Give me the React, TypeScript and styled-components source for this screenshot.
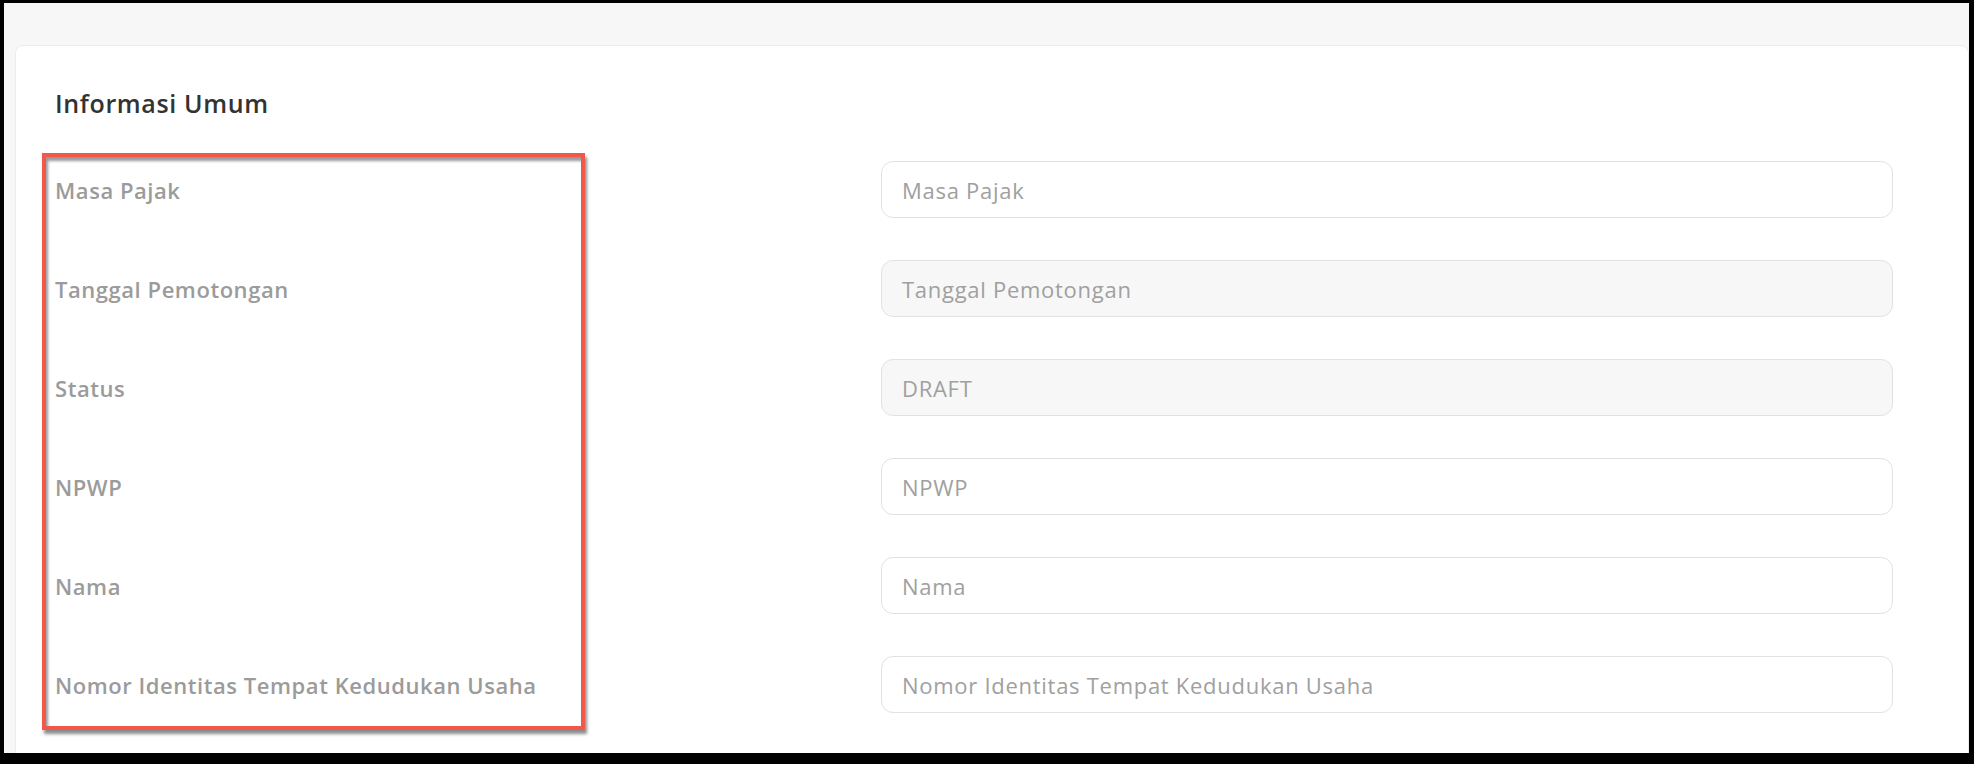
import React from "react";
import styled, { createGlobalStyle } from "styled-components";

const GlobalStyle = createGlobalStyle`
  html, body {
    margin: 0;
    padding: 0;
    background: #000;
  }
  * { box-sizing: border-box; }
  body {
    font-family: "Open Sans", Lato, sans-serif;
  }
`;

const Frame = styled.div`
  position: relative;
  margin: 3px 5px 0 4px;
  height: 750px;
  overflow: hidden;
  background: #f7f7f7;
  padding: 42px 0 0 11px;
`;

const Card = styled.section`
  background: #fff;
  border: 1px solid #ececec;
  border-radius: 8px;
  padding: 43px 60px 40px 39px;
  min-height: 760px;
`;

const Heading = styled.h2`
  margin: 0;
  font-size: 25px;
  line-height: 29px;
  font-weight: 600;
  letter-spacing: 0.65px;
  color: #333;
`;

const Form = styled.div`
  margin-top: 43px;
  display: flex;
  flex-direction: column;
  gap: 42px;
`;

const Row = styled.div`
  display: grid;
  grid-template-columns: 826px 1012px;
  align-items: center;
`;

const Label = styled.label`
  font-size: 22px;
  font-weight: 600;
  letter-spacing: 0.55px;
  color: #9b9b9b;
`;

const Field = styled.input<{ $disabled?: boolean }>`
  height: 57px;
  width: 100%;
  padding: 0 20px;
  border: 1px solid #e2e2e2;
  border-radius: 12px;
  background: ${(p) => (p.$disabled ? "#f7f7f7" : "#fff")};
  font-family: inherit;
  font-size: 22px;
  letter-spacing: 0.72px;
  color: #a0a0a0;
  -webkit-text-fill-color: #a0a0a0;
  outline: none;
  &::placeholder {
    color: #a0a0a0;
    opacity: 1;
  }
`;

const Annotation = styled.div`
  position: absolute;
  left: 38px;
  top: 150px;
  width: 543px;
  height: 577px;
  border: 4px solid #f2584a;
  box-shadow: 2px 4px 3px rgba(0, 0, 0, 0.45),
    inset 2px 4px 3px rgba(0, 0, 0, 0.4);
  pointer-events: none;
`;

type RowData = { label: string; placeholder?: string; value?: string; disabled?: boolean };

const rows: RowData[] = [
  { label: "Masa Pajak", placeholder: "Masa Pajak" },
  { label: "Tanggal Pemotongan", placeholder: "Tanggal Pemotongan", disabled: true },
  { label: "Status", value: "DRAFT", disabled: true },
  { label: "NPWP", placeholder: "NPWP" },
  { label: "Nama", placeholder: "Nama" },
  { label: "Nomor Identitas Tempat Kedudukan Usaha", placeholder: "Nomor Identitas Tempat Kedudukan Usaha" },
];

export default function App() {
  return (
    <>
      <GlobalStyle />
      <Frame>
        <Card>
          <Heading>Informasi Umum</Heading>
          <Form>
            {rows.map((r) => (
              <Row key={r.label}>
                <Label>{r.label}</Label>
                <Field
                  $disabled={r.disabled}
                  placeholder={r.placeholder}
                  value={r.value ?? ""}
                  readOnly
                />
              </Row>
            ))}
          </Form>
        </Card>
        <Annotation />
      </Frame>
    </>
  );
}
